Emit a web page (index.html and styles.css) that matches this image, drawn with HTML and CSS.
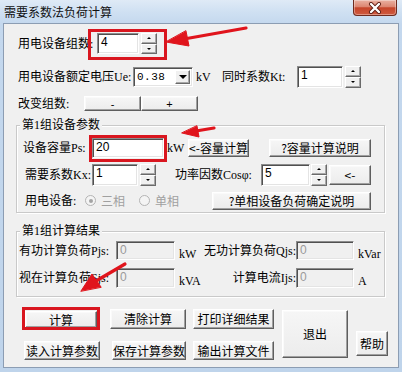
FILE: index.html
```html
<!DOCTYPE html>
<html lang="zh-CN">
<head>
<meta charset="utf-8">
<title>需要系数法负荷计算</title>
<link rel="stylesheet" href="styles.css">
</head>
<body>
<div class="window">
  <div class="titlebar">
    <span class="title">需要系数法负荷计算</span>
    <span class="close"><svg width="20" height="12" viewBox="0 0 20 12"><path d="M6 2 L14 10 M14 2 L6 10" stroke="#5a1a10" stroke-width="4" stroke-linecap="round"/><path d="M6 2 L14 10 M14 2 L6 10" stroke="#fff" stroke-width="2.4" stroke-linecap="round"/></svg></span>
  </div>
  <div class="client">
    <div class="row r1">
      <span class="lbl w79">用电设备组数:</span>
      <span class="edit w42">4</span>
      <span class="spin"><i class="up"></i><i class="dn"></i></span>
    </div>
    <div class="row r2">
      <span class="lbl w115">用电设备额定电压Ue:</span>
      <span class="select"><span class="sel-text">0.38</span><span class="drop"></span></span>
      <span class="unit w29">kV</span>
      <span class="lbl w75">同时系数Kt:</span>
      <span class="edit w46">1</span>
      <span class="spin"><i class="up"></i><i class="dn"></i></span>
    </div>
    <div class="row r3">
      <span class="lbl w66">改变组数:</span>
      <span class="btn w57">-</span>
      <span class="btn w57">+</span>
    </div>

    <div class="group g1">
      <span class="legend">第1组设备参数</span>
      <div class="row ps">
        <span class="lbl w69">设备容量Ps:</span>
        <span class="edit w72">20</span>
        <span class="unit w24">kW</span>
        <span class="btn w61">&lt;-容量计算</span>
        <span class="btn w102 ml20">?容量计算说明</span>
      </div>
      <div class="row kx">
        <span class="lbl w67">需要系数Kx:</span>
        <span class="edit w46">1</span>
        <span class="spin"><i class="up"></i><i class="dn"></i></span>
        <span class="lbl w86 ml19">功率因数Cosφ:</span>
        <span class="edit w49">5</span>
        <span class="spin ml1"><i class="up"></i><i class="dn"></i></span>
        <span class="btn w42 ml2 h20">&lt;-</span>
      </div>
      <div class="row ph">
        <span class="lbl w60">用电设备:</span>
        <span class="radio w54"><i class="dot on"></i>三相</span>
        <span class="radio w73"><i class="dot"></i>单相</span>
        <span class="btn w159">?单相设备负荷确定说明</span>
      </div>
    </div>

    <div class="group g2">
      <span class="legend">第1组计算结果</span>
      <div class="row pj">
        <span class="lbl w97">有功计算负荷Pjs:</span>
        <span class="edit dis w59">0</span>
        <span class="unit u2 w24">kW</span>
        <span class="lbl w97 ra">无功计算负荷Qjs:</span>
        <span class="edit dis w58">0</span>
        <span class="unit u2">kVar</span>
      </div>
      <div class="row sj">
        <span class="lbl w97">视在计算负荷Sjs:</span>
        <span class="edit dis w59">0</span>
        <span class="unit u2 w24">kVA</span>
        <span class="lbl w97 ra">计算电流Ijs:</span>
        <span class="edit dis w58">0</span>
        <span class="unit u2">A</span>
      </div>
    </div>

    <div class="actions">
      <span class="btn b-calc">计算</span>
      <span class="btn b-clear">清除计算</span>
      <span class="btn b-print">打印详细结果</span>
      <span class="btn b-exit">退出</span>
      <span class="btn b-help">帮助</span>
      <span class="btn b-read">读入计算参数</span>
      <span class="btn b-save">保存计算参数</span>
      <span class="btn b-out">输出计算文件</span>
    </div>
  </div>

  <span class="mark m1"></span>
  <span class="mark m2"></span>
  <span class="mark m3"></span>
  <svg class="arrows" width="402" height="372" viewBox="0 0 402 372">
    <g stroke="#e0141c" stroke-width="3.2" stroke-linecap="round" fill="#e0141c">
      <line x1="246" y1="28" x2="184" y2="39"/>
      <polygon points="166,42 189,46 186,31" stroke-width="1"/>
      <line x1="214" y1="128" x2="196" y2="131"/>
      <polygon points="182,133 199,137 197,126" stroke-width="1"/>
      <line x1="125" y1="264" x2="96" y2="281"/>
      <polygon points="81,291 92,274 101,287" stroke-width="1"/>
    </g>
  </svg>
</div>
</body>
</html>
```
FILE: styles.css
```css
* { box-sizing: border-box; margin: 0; padding: 0; }
html, body { width: 402px; height: 372px; overflow: hidden; }
body {
  font-family: "Liberation Serif", "Noto Sans CJK SC", serif;
  font-size: 12px;
  color: #000;
  background: #c6d9ee;
}
.window {
  position: relative;
  width: 402px;
  height: 372px;
  padding: 0 3px 4px 3px;
  background: linear-gradient(#dfeaf6 0, #cfe0f2 12px, #c4d8ee 24px, #bfd4eb 100%);
}
.titlebar {
  height: 23px;
  display: flex;
  align-items: center;
  padding-left: 1px;
}
.title {
  font-family: "Noto Sans CJK SC", sans-serif;
  font-size: 12px;
  line-height: 14px;
  color: #111;
}
.close {
  margin-left: auto;
  margin-right: 2px;
  align-self: flex-start;
  width: 44px;
  height: 16px;
  border: 1px solid #6e2b1f;
  border-top: none;
  border-radius: 0 0 4px 4px;
  background: linear-gradient(#eab1a2 0, #dc8672 45%, #c6452b 52%, #cf5a3f 100%);
  display: flex;
  align-items: center;
  justify-content: center;
  box-shadow: inset 0 0 0 1px rgba(255,255,255,0.35);
}
.client {
  height: 345px;
  border: 1px solid #8c9db3;
  background: #f0f0f0;
  display: flex;
  flex-direction: column;
}
.row {
  display: flex;
  align-items: center;
  flex: none;
}
.r1 { margin-top: 9px; height: 21px; padding-left: 14px; }
.r2 { margin-top: 11px; height: 23px; padding-left: 14px; }
.r3 { margin-top: 8px; height: 15px; padding-left: 14px; }

.lbl { flex: none; white-space: nowrap; line-height: 14px; }
.ra { text-align: right; }
.unit { flex: none; white-space: nowrap; line-height: 12px; padding-left: 3px; font-size: 12px; }
.u2 { margin-top: 6px; padding-left: 4px; }

.w24 { width: 24px; } .w29 { width: 29px; } .w42 { width: 42px; } .w46 { width: 46px; }
.w49 { width: 49px; } .w54 { width: 54px; } .w57 { width: 57px; } .w58 { width: 58px; }
.w59 { width: 59px; } .w60 { width: 60px; } .w61 { width: 61px; } .w66 { width: 66px; }
.w67 { width: 67px; } .w69 { width: 69px; } .w72 { width: 72px; } .w73 { width: 73px; }
.w75 { width: 75px; } .w79 { width: 79px; } .w86 { width: 86px; } .w97 { width: 97px; }
.w102 { width: 102px; } .w115 { width: 115px; } .w159 { width: 159px; }
.ml1 { margin-left: 1px; } .ml2 { margin-left: 2px; } .ml19 { margin-left: 19px; } .ml20 { margin-left: 20px; }

.edit {
  flex: none;
  height: 100%;
  background: #fff;
  border: 1px solid;
  border-color: #8c8c8c #ffffff #ffffff #8c8c8c;
  box-shadow: inset 1px 1px 0 #505050, inset -1px -1px 0 #e4e4e4;
  font-family: "Liberation Sans", sans-serif;
  font-size: 12px;
  line-height: 13px;
  padding: 2px 0 0 3px;
}
.r2 .edit { height: 22px; }
.ps .edit { height: 20px; }
.kx .edit { height: 22px; }
.edit.dis { background: #f0f0f0; color: #9a9a9a; }
.pj .edit { height: 19px; }
.sj .edit { height: 20px; }

.spin {
  flex: none;
  width: 16px;
  height: 100%;
  margin-left: 2px;
  display: flex;
  flex-direction: column;
}
.r2 .spin, .kx .spin { height: 22px; }
.spin.ml1 { margin-left: 1px; }
.spin i {
  flex: 1;
  display: flex;
  align-items: center;
  justify-content: center;
  background: #f0f0f0;
  border: 1px solid;
  border-color: #ffffff #6a6a6a #6a6a6a #ffffff;
  box-shadow: inset -1px -1px 0 #a8a8a8;
}
.spin i::after {
  content: "";
  width: 0; height: 0;
  border-left: 2px solid transparent;
  border-right: 2px solid transparent;
}
.spin .up::after { border-bottom: 2px solid #000; }
.spin .dn::after { border-top: 2px solid #000; }

.select {
  flex: none;
  width: 60px;
  height: 20px;
  background: #fff;
  border: 1px solid;
  border-color: #8c8c8c #ffffff #ffffff #8c8c8c;
  box-shadow: inset 1px 1px 0 #505050, inset -1px -1px 0 #e4e4e4;
  display: flex;
  padding: 2px 2px 2px 2px;
}
.sel-text {
  flex: 1;
  font-family: "Liberation Mono", monospace;
  font-size: 11px;
  line-height: 15px;
  padding-left: 1px;
  letter-spacing: 0.5px;
}
.drop {
  flex: none;
  width: 15px;
  background: #f0f0f0;
  border: 1px solid;
  border-color: #ffffff #6a6a6a #6a6a6a #ffffff;
  box-shadow: inset -1px -1px 0 #a8a8a8;
  display: flex;
  align-items: center;
  justify-content: center;
}
.drop::after {
  content: "";
  border-left: 4px solid transparent;
  border-right: 4px solid transparent;
  border-top: 4px solid #000;
}

.btn {
  flex: none;
  display: flex;
  align-items: center;
  justify-content: center;
  background: linear-gradient(#f6f6f6, #ececec);
  border: 1px solid;
  border-color: #ffffff #5e5e5e #5e5e5e #ffffff;
  box-shadow: inset -1px -1px 0 #a0a0a0, inset 1px 1px 0 #fafafa;
  font-family: "Noto Sans CJK SC", "Liberation Sans", sans-serif;
  font-size: 12px;
  line-height: 14px;
  white-space: nowrap;
  color: #000;
}
.r3 .btn { height: 15px; font-family: "Liberation Sans", sans-serif; font-size: 11px; }
.ps .btn { height: 18px; }
.h20 { height: 20px !important; }
.ph .btn { height: 18px; }

.group {
  flex: none;
  margin-left: 12px;
  width: 369px;
  border: 1px solid #c9c9c9;
  box-shadow: inset 1px 1px 0 #ffffff, 1px 1px 0 #ffffff;
  display: flex;
  flex-direction: column;
}
.g1 { margin-top: 14px; height: 88px; }
.g2 { margin-top: 18px; height: 66px; }
.legend {
  display: block;
  align-self: flex-start;
  margin: -8px 0 0 3px;
  padding: 0 2px;
  background: #f0f0f0;
  line-height: 14px;
  height: 14px;
  white-space: nowrap;
}
.ps { margin-top: 5px; height: 21px; padding-left: 6px; }
.kx { margin-top: 5px; height: 23px; padding-left: 8px; }
.ph { margin-top: 5px; height: 19px; padding-left: 8px; }
.pj { margin-top: 3px; height: 19px; padding-left: 2px; }
.sj { margin-top: 8px; height: 20px; padding-left: 2px; }

.radio {
  flex: none;
  display: flex;
  align-items: center;
  color: #a0a0a0;
  font-family: "Noto Sans CJK SC", sans-serif;
  white-space: nowrap;
}
.dot {
  width: 11px;
  height: 11px;
  border-radius: 50%;
  border: 1px solid #b4b4b4;
  background: #f4f4f4;
  margin-right: 5px;
  display: flex;
  align-items: center;
  justify-content: center;
}
.dot.on::after {
  content: "";
  width: 4px;
  height: 4px;
  border-radius: 50%;
  background: #a4a4a4;
}

.actions {
  flex: none;
  margin: 12px 0 0 18px;
  display: grid;
  grid-template-columns: 78px 79px 81px 67px 33px;
  grid-template-rows: 20px 19px;
  column-gap: 7px;
  row-gap: 12px;
}
.b-calc { grid-column: 1; grid-row: 1; width: 72px; height: 17px; justify-self: center; align-self: center; margin-top: 1px; }
.b-clear { grid-column: 2; grid-row: 1; width: 76px; justify-self: end; }
.b-print { grid-column: 3; grid-row: 1; }
.b-exit { grid-column: 4; grid-row: 1 / 3; height: 48px; margin-top: 1px; justify-self: end; width: 66px; }
.b-help { grid-column: 5; grid-row: 1 / 3; align-self: end; height: 25px; margin-bottom: 4px; justify-self: end; width: 32px; }
.b-read { grid-column: 1; grid-row: 2; width: 76px; justify-self: end; }
.b-save { grid-column: 2; grid-row: 2; width: 74px; justify-self: end; }
.b-out { grid-column: 3; grid-row: 2; }

.mark {
  position: absolute;
  border: 3px solid #d9161f;
  pointer-events: none;
}
.m1 { left: 88px; top: 29px; width: 79px; height: 31px; }
.m2 { left: 89px; top: 135px; width: 78px; height: 27px; }
.m3 { left: 22px; top: 307px; width: 78px; height: 23px; }
.arrows { position: absolute; left: 0; top: 0; pointer-events: none; }
```
